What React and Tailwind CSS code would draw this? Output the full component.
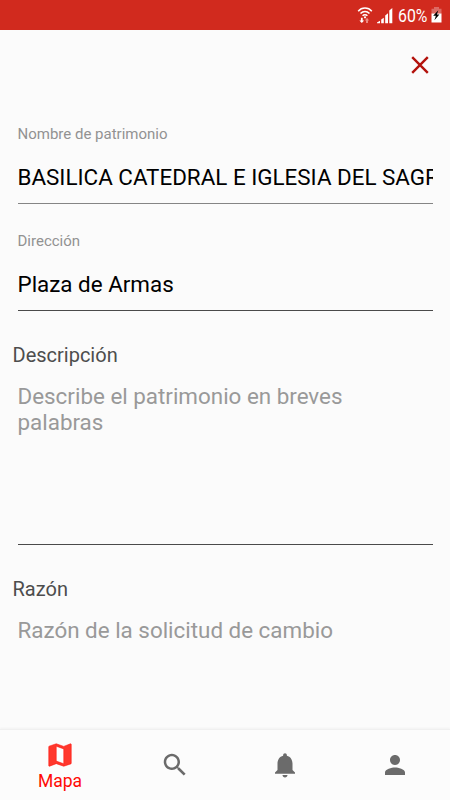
// src/pages/SolicitudCambio.jsx
import { useState } from "react";

const inputClass =
  "block w-full bg-transparent outline-none text-[22.4px] text-black placeholder:text-[#999999]";

function StatusBar() {
  return (
    <div className="h-[30px] shrink-0 bg-[#d12a1e] flex items-center justify-end pr-2 text-white">
      <svg className="w-4 h-[18px] mr-1" viewBox="0 0 16 18" fill="none" stroke="#fff" strokeWidth="1.5">
        <path d="M1.2 5.2C4.8 1 11.2 1 14.8 5.2" />
        <path d="M3.5 7.6c2.6-2.9 6.4-2.9 9 0" />
        <path d="M5.6 9.8c1.4-1.5 3.4-1.5 4.8 0" />
        <circle cx="8" cy="11.3" r="1.1" fill="#fff" stroke="none" />
        <path d="M5.7 11.8v2.6h1.5L4.8 17l-2.4-2.6h1.5v-2.6z" fill="#fff" stroke="none" />
        <path d="M9 17v-2.6H7.9l2.1-2.6 2.1 2.6H11V17z" fill="#ec8880" stroke="none" />
      </svg>
      <svg className="w-4 h-[17px] mr-[5px]" viewBox="0 0 16 17" fill="#fff">
        <path d="M0 16.3h3v-2.5L0 15.6zM4.2 16.3h2.6v-5.5l-2.6 1.8zM8.2 16.3h2.8V6.2L8.2 8.4zM12.3 16.3h3V1l-3 2.4z" />
      </svg>
      <span className="text-[18px] leading-none w-[30px] mr-[3px] mt-0.5">
        <span className="inline-block origin-left scale-x-[0.88]">60%</span>
      </span>
      <svg className="w-[11px] h-4" viewBox="0 0 11 16">
        <path d="M3 0h5v1.8h2.5v5H.5v-5H3z" fill="#dd6a63" />
        <path d="M.5 6.5h10v9H.5z" fill="#fff" />
        <path d="M7.3 3.2L2.2 8.8h2.7L3.4 13.2l5-5.6H5.9z" fill="#000" />
      </svg>
    </div>
  );
}

const tabs = [
  {
    id: "mapa",
    label: "Mapa",
    path: "M20.5 3l-.16.03L15 5.1 9 3 3.36 4.9c-.21.07-.36.25-.36.48V20.5c0 .28.22.5.5.5l.16-.03L9 18.9l6 2.1 5.64-1.9c.21-.07.36-.25.36-.48V3.5c0-.28-.22-.5-.5-.5zM15 19l-6-2.11V5l6 2.11V19z",
  },
  {
    id: "buscar",
    label: "Buscar",
    path: "M15.5 14h-.79l-.28-.27C15.41 12.59 16 11.11 16 9.5 16 5.91 13.09 3 9.5 3S3 5.91 3 9.5 5.91 16 9.5 16c1.61 0 3.09-.59 4.23-1.57l.27.28v.79l5 4.99L20.49 19l-4.99-5zm-6 0C7.01 14 5 11.99 5 9.5S7.01 5 9.5 5 14 7.01 14 9.5 11.99 14 9.5 14z",
  },
  {
    id: "avisos",
    label: "Avisos",
    path: "M12 22c1.1 0 2-.9 2-2h-4c0 1.1.89 2 2 2zm6-6v-5c0-3.07-1.64-5.64-4.5-6.32V4c0-.83-.67-1.5-1.5-1.5s-1.5.67-1.5 1.5v.68C7.63 5.36 6 7.92 6 11v5l-2 2v1h16v-1l-2-2z",
  },
  {
    id: "perfil",
    label: "Perfil",
    path: "M12 12c2.21 0 4-1.79 4-4s-1.79-4-4-4-4 1.79-4 4 1.79 4 4 4zm0 2c-2.67 0-8 1.34-8 4v2h16v-2c0-2.66-5.33-4-8-4z",
  },
];

function BottomNav({ active, onChange }) {
  return (
    <nav className="h-[71px] shrink-0 grid grid-cols-[120px_110px_110px_110px] border-t border-[#f0f0f0] bg-[#fcfcfc] shadow-[0_-1px_2px_rgba(0,0,0,0.04)]">
      {tabs.map((t) => (
        <button
          key={t.id}
          aria-label={t.label}
          onClick={() => onChange(t.id)}
          className={`flex flex-col items-center ${t.id === active ? "pt-[10px] text-[#ff0a05]" : "pt-5 text-[#6b6b6b]"}`}
        >
          <svg
            className={`w-[30px] h-[30px] ${t.id === active ? "fill-[#ff372c] stroke-[#ff0a05]" : "fill-current"}`}
            viewBox="0 0 24 24"
            strokeWidth="0.4"
          >
            <path d={t.path} />
          </svg>
          {t.id === active && <span className="text-[17.5px] leading-[22px]">{t.label}</span>}
        </button>
      ))}
    </nav>
  );
}

export default function SolicitudCambio() {
  const [tab, setTab] = useState("mapa");
  const [form, setForm] = useState({
    nombre: "BASILICA CATEDRAL E IGLESIA DEL SAGRARIO",
    direccion: "Plaza de Armas",
    descripcion: "",
    razon: "",
  });

  const onField = (name) => (e) => setForm((f) => ({ ...f, [name]: e.target.value }));

  return (
    <div className="h-screen flex flex-col overflow-hidden bg-[#fbfbfb] font-[Roboto,sans-serif]">
      <StatusBar />

      <main className="flex-1 min-h-0 overflow-hidden">
        <div className="h-[70px] flex justify-end items-center pr-[21px]">
          <button aria-label="Cerrar">
            <svg className="w-[18px] h-[18px]" viewBox="0 0 18 18" stroke="#b3120c" strokeWidth="2.4">
              <path d="M1.2 1.2l15.6 15.6M16.8 1.2L1.2 16.8" />
            </svg>
          </button>
        </div>

        <form className="pl-[17.5px] pr-[17.5px]">
          <div className="h-[104px] pt-6 border-b border-[#858585]">
            <label className="block text-[15px] leading-5 text-[#929292]">Nombre de patrimonio</label>
            <input className={`${inputClass} h-[27px] mt-5`} value={form.nombre} onChange={onField("nombre")} />
          </div>

          <div className="h-[107px] pt-[27px] border-b border-[#4a4a4a]">
            <label className="block text-[15px] leading-5 text-[#929292]">Dirección</label>
            <input className={`${inputClass} h-[27px] mt-5`} value={form.direccion} onChange={onField("direccion")} />
          </div>

          <div className="h-[234px] pt-8 border-b border-[#4a4a4a]">
            <label className="block -ml-[5px] text-[20px] leading-6 text-[#4d4d4d]">Descripción</label>
            <textarea
              className={`${inputClass} h-[140px] mt-4 leading-[26px] resize-none`}
              placeholder="Describe el patrimonio en breves palabras"
              value={form.descripcion}
              onChange={onField("descripcion")}
            />
          </div>

          <div className="pt-8">
            <label className="block -ml-[5px] text-[20px] leading-6 text-[#4d4d4d]">Razón</label>
            <textarea
              className={`${inputClass} h-[90px] mt-4 leading-[26px] resize-none`}
              placeholder="Razón de la solicitud de cambio"
              value={form.razon}
              onChange={onField("razon")}
            />
          </div>
        </form>
      </main>

      <BottomNav active={tab} onChange={setTab} />
    </div>
  );
}
